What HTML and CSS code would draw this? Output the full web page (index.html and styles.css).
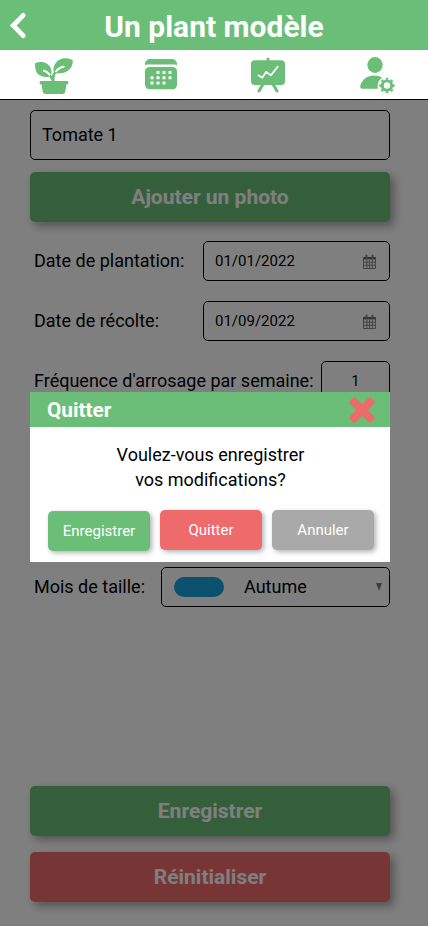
FILE: index.html
```html
<!DOCTYPE html>
<html lang="fr">
<head>
<meta charset="utf-8">
<title>Un plant modèle</title>
<link rel="stylesheet" href="styles.css">
</head>
<body>
<header class="header">
  <svg class="back" width="18" height="27" viewBox="0 0 18 27" fill="none" stroke="#fff" stroke-width="4.8" stroke-linecap="round" stroke-linejoin="miter"><path d="M14.2 3.4 4.2 13.5 14.2 23.6"/></svg>
  <h1 class="title">Un plant modèle</h1>
</header>
<nav class="nav">
  <a class="tab plant"><svg width="38" height="37" viewBox="0 0 38 37">
    <path fill="currentColor" d="M.4 4.9C6 2.800 15.200 4.200 16.400 12.600c.2 1.500.2 3-.2 4.600-1 .8-2.600 1.800-4.600 1.800C5 19 .4 15.500.1 8.500 0 7.200 0 5.800.4 4.900Z"/>
    <path fill="currentColor" d="M37.700 2.300C38.300 9 33 16.300 22.500 15.200l-3 1.300C18 13 17.700 9 20.700 5 24.600-.2 31.500-.9 37.700 2.300Z"/>
    <path fill="none" stroke="#fff" stroke-width="1.700" stroke-linecap="round" d="M8.800 12.600c3.500 1 5.600 3.200 7.400 6.400M19 17.500C20.200 13 23.500 9.700 28.600 8.700"/>
    <path fill="none" stroke="currentColor" stroke-width="2.600" d="M18.200 24v-3.500c0-2.500.6-4.700 2.200-6.500M17.800 22.500c-.6-2-1.600-3.600-3-5"/>
    <rect x="4.600" y="23" width="28.800" height="3.200" rx="1.300" fill="currentColor"/>
    <path fill="currentColor" d="M6.200 25h25.600l-1.500 8.300c-.3 1.800-1.200 2.700-3 2.700H10.700c-1.800 0-2.700-.9-3-2.700Z"/>
    <path fill="none" stroke="#fff" stroke-width="1.700" stroke-linecap="round" d="M8.800 12.600c2.700.8 4.300 2.100 5.500 3.900M22 12.500c1.600-2 3.600-3.200 6.600-3.800"/>
  </svg></a>
  <a class="tab"><svg width="32" height="31" viewBox="0 0 32 31" fill="currentColor">
    <path d="M0 6.200V5a5 5 0 0 1 5-5h22a5 5 0 0 1 5 5v1.200q-1-.7-2.500-.7h-27Q1 5.500 0 6.200Z"/>
    <rect y="8" width="32" height="22.200" rx="4.500"/>
    <g fill="#fff"><rect x="11.500" y="12" width="3" height="3" rx=".6"/><rect x="17.500" y="12" width="3" height="3" rx=".6"/><rect x="23.500" y="12" width="3" height="3" rx=".6"/><rect x="5.500" y="17.300" width="3" height="3" rx=".6"/><rect x="11.500" y="17.300" width="3" height="3" rx=".6"/><rect x="17.500" y="17.300" width="3" height="3" rx=".6"/><rect x="23.500" y="17.300" width="3" height="3" rx=".6"/><rect x="5.500" y="22.500" width="3" height="3" rx=".6"/><rect x="11.500" y="22.500" width="3" height="3" rx=".6"/><rect x="17.500" y="22.500" width="3" height="3" rx=".6"/></g>
  </svg></a>
  <a class="tab"><svg width="34" height="36" viewBox="0 0 34 36" fill="none">
    <rect y="3.200" width="34" height="24.800" rx="3.800" fill="currentColor"/>
    <path stroke="currentColor" stroke-width="3" stroke-linecap="round" d="M17 2V4M11.800 27.500 8 34M22.200 27.500 26 34"/>
    <path stroke="#fff" stroke-width="1.700" stroke-linecap="round" stroke-linejoin="round" d="M7.500 18.300l3.800 2.500 4-6 4.500 3.600 7-8.800"/>
  </svg></a>
  <a class="tab user"><svg width="35" height="37" viewBox="0 0 35 37">
    <ellipse cx="15" cy="8" rx="7.700" ry="7.900" fill="currentColor"/>
    <path fill="currentColor" d="M22.300 20.600C16 17.200 7.500 17.900 3.200 23.200 1.200 25.600-.4 28.700.5 30.700c.4.800 1 1.100 2 1.100h15.400c-.9-4 .4-8.600 4.400-11.200Z"/>
    <circle cx="27" cy="28.600" r="4.700" fill="none" stroke="currentColor" stroke-width="2.900"/>
    <circle cx="27" cy="28.600" r="6.800" fill="none" stroke="currentColor" stroke-width="1.900" pathLength="80" stroke-dasharray="5 5" stroke-dashoffset="2.500"/>
  </svg></a>
</nav>
<main class="page">
  <form class="form">
    <div class="field name">Tomate 1</div>
    <button type="button" class="btn">Ajouter un photo</button>
    <div class="row"><label>Date de plantation:</label>
      <div class="field date"><span>01/01/2022</span><svg class="cal" width="13" height="16" viewBox="0 0 13 16" fill="none" stroke="#888"><path stroke-width="1" d="M.5 3.500h12v11H.5zM1 8.200h11M1 11.300h11M3.900 6v8.500M6.500 6v8.500M9.400 6v8.500"/><path stroke-width="2.500" stroke="#666" d="M.5 4.200h12"/><path stroke-width="2" stroke-linecap="round" d="M3.500 1.500v2M9.500 1.500v2"/></svg></div></div>
    <div class="row"><label>Date de récolte:</label>
      <div class="field date"><span>01/09/2022</span><svg class="cal" width="13" height="16" viewBox="0 0 13 16" fill="none" stroke="#888"><path stroke-width="1" d="M.5 3.500h12v11H.5zM1 8.200h11M1 11.300h11M3.900 6v8.500M6.500 6v8.500M9.400 6v8.500"/><path stroke-width="2.500" stroke="#666" d="M.5 4.200h12"/><path stroke-width="2" stroke-linecap="round" d="M3.500 1.500v2M9.500 1.500v2"/></svg></div></div>
    <div class="row"><label>Fréquence d'arrosage par semaine:</label>
      <div class="field count">1</div></div>
    <div class="row season"><label>Mois de taille:</label>
      <div class="field select"><span class="pill"></span><span class="value">Autume</span><svg class="caret" width="6" height="8" viewBox="0 0 6 8"><path d="M0 0h6L3 8z" fill="#777"/></svg></div></div>
    <div class="actions">
      <button type="button" class="btn">Enregistrer</button>
      <button type="button" class="btn danger">Réinitialiser</button>
    </div>
  </form>
  <div class="overlay">
    <section class="modal">
      <div class="modal-head"><h2>Quitter</h2>
        <svg width="26" height="26" viewBox="0 0 26 26" fill="#ee6a6b"><g transform="rotate(45 13 13)"><rect x="-2" y="9" width="30" height="8" rx="2"/><rect x="9" y="-2" width="8" height="30" rx="2"/></g></svg></div>
      <p class="message">Voulez-vous enregistrer<br>vos modifications?</p>
      <div class="choices">
        <button type="button" class="choice save">Enregistrer</button>
        <button type="button" class="choice quit">Quitter</button>
        <button type="button" class="choice">Annuler</button>
      </div>
    </section>
  </div>
</main>
</body>
</html>
```
FILE: styles.css
```css
* { box-sizing: border-box; }
body { margin: 0; height: 926px; display: flex; flex-direction: column; overflow: hidden; font-family: Roboto, sans-serif; font-size: 18px; color: #000; background: #fff; }
button { border: 0; padding: 0; font-family: inherit; color: #fff; }
.header { height: 50px; flex: none; display: grid; grid-template-columns: 28px 1fr 28px; align-items: center; background: #6bbe77; color: #fff; }
.back { margin-left: 9px; }
.title { margin: 0; padding-top: 3px; text-align: center; font-size: 30px; line-height: 36px; font-weight: 700; white-space: nowrap; }
.nav { height: 50px; flex: none; display: grid; grid-template-columns: repeat(4, 107px); align-items: center; border-bottom: 1px solid #000; color: #6bbe77; }
.tab { display: flex; justify-content: center; }
.plant { padding-top: 3px; }
.user { padding: 2px 0 0 5px; }
.page { position: relative; flex: 1; }
.form { height: 826px; padding: 10px 38px 24px 30px; display: flex; flex-direction: column; }
.field { border: 1px solid #000; border-radius: 5px; display: flex; align-items: center; height: 40px; }
.name { height: 50px; padding: 0 0 1px 11px; margin-bottom: 12px; }
.btn { width: 100%; height: 50px; flex: none; border-radius: 5px; background: #6bbe77; font-size: 21px; font-weight: 700; box-shadow: 4px 4px 10px rgba(0, 0, 0, .35); }
.danger { background: #ee6a6b; }
.row { height: 40px; margin-top: 20px; padding-left: 4px; display: flex; align-items: center; justify-content: space-between; flex: none; white-space: nowrap; }
.row label { padding-bottom: 2px; }
.btn + .row { margin-top: 19px; }
.date { width: 187px; padding: 0 13px 0 11px; justify-content: space-between; font-size: 15px; }
.cal { margin-top: 1px; }
.count { width: 69px; padding-bottom: 1px; justify-content: center; font-size: 14px; }
.season { margin-top: 166px; }
.select { width: 229px; padding: 0 7px 0 12px; }
.pill { width: 50px; height: 20px; margin-right: 20px; border-radius: 10px; background: #16a3dc; }
.value { padding-bottom: 1px; }
.caret { margin-left: auto; }
.actions { margin-top: auto; display: grid; gap: 16px; }
.overlay { position: absolute; inset: 0; padding: 292px 38px 0 30px; background: rgba(0, 0, 0, .5); }
.modal { height: 170px; background: #fff; }
.modal-head { height: 35px; padding: 0 15px 0 17px; display: flex; align-items: center; justify-content: space-between; background: #6bbe77; color: #fff; }
.modal-head h2 { margin: 0; font-size: 20.8px; font-weight: 700; }
.message { margin: 15px 0 18px; padding-left: 1px; text-align: center; line-height: 25px; }
.choices { display: flex; gap: 10px; padding-left: 18px; }
.choice { width: 102px; height: 40px; border-radius: 5px; background: #a9a9a9; font-size: 15px; font-weight: 400; box-shadow: 2px 2px 5px rgba(0, 0, 0, .3); }
.save { background: #6bbe77; margin-top: 1px; }
.quit { background: #ee6a6b; }
```
